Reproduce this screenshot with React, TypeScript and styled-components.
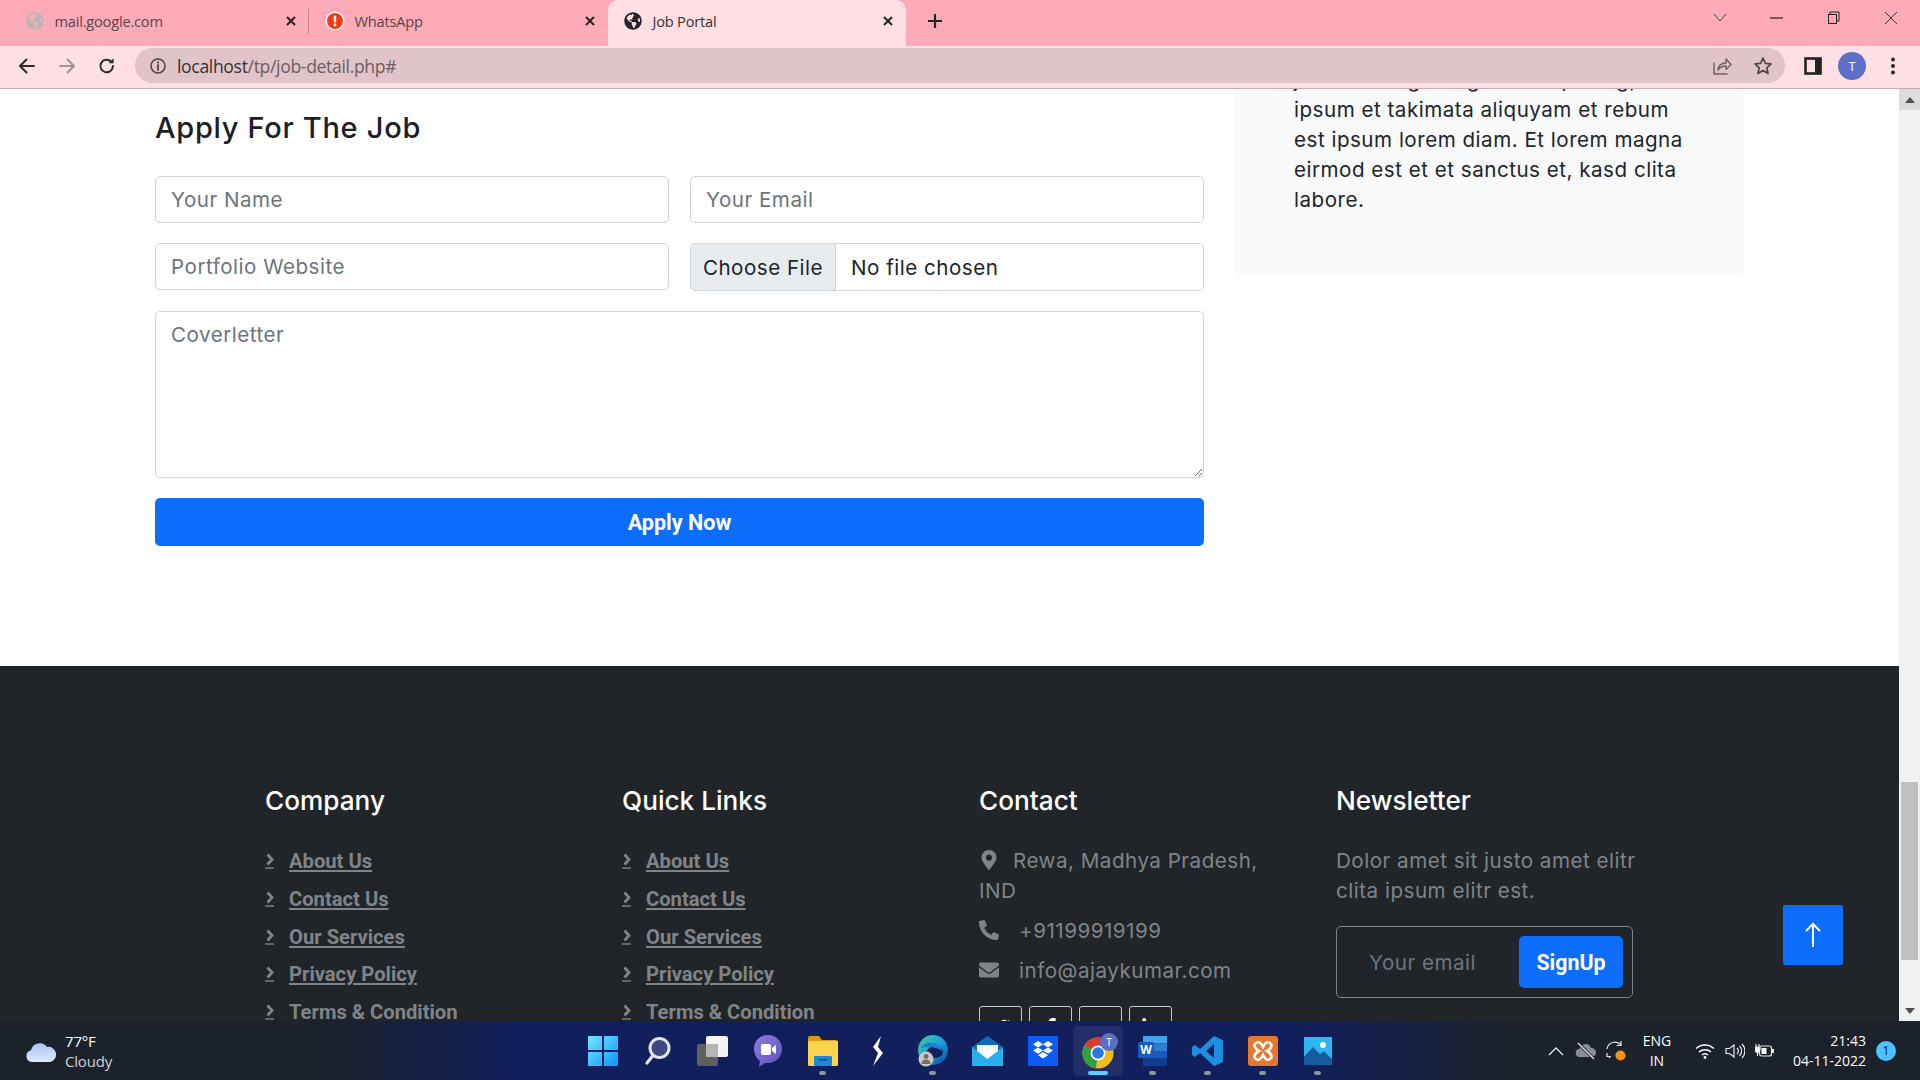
import React from "react";
import styled, { createGlobalStyle } from "styled-components";
import { FaGlobeAmericas, FaMapMarkerAlt, FaPhoneAlt, FaEnvelope, FaTwitter, FaFacebookF, FaYoutube, FaLinkedinIn } from "react-icons/fa";

const SANS = `"Inter", "Liberation Sans", sans-serif`;
const UI = `"Open Sans", "Liberation Sans", sans-serif`;
const BOLD = `"Roboto", "Liberation Sans", sans-serif`;

const Global = createGlobalStyle`
  html, body { margin: 0; height: 100%; overflow: hidden; background: #fff; }
  * { box-sizing: border-box; }
`;

const Screen = styled.div`display: flex; flex-direction: column; height: 100vh; width: 100vw;`;

/* ---------- browser chrome ---------- */
const TabStrip = styled.div`
  height: 46px; flex: none; background: #ffaab8; display: flex; align-items: stretch; font-family: ${UI};
`;
const Tab = styled.div<{ $active?: boolean; $w: number; $pl: number; $sep?: boolean }>`
  width: ${p => p.$w}px; padding: 0 12px 5px ${p => p.$pl}px; display: flex; align-items: center; position: relative;
  background: ${p => (p.$active ? "#fedfe4" : "transparent")};
  border-radius: ${p => (p.$active ? "10px 10px 0 0" : "0")};
  ${p => p.$sep && `&::after { content: ""; position: absolute; right: 0; top: 9px; width: 1px; height: 25px; background: #b88a94; }`}
`;
const TabTitle = styled.span<{ $muted?: boolean }>`
  flex: 1; font-size: 14.6px; letter-spacing: -0.2px; color: ${p => (p.$muted ? "#55464a" : "#3a3033")}; margin-left: 9.5px; white-space: nowrap;
`;
const Fav = styled.span<{ $c: string }>`display: flex; justify-content: center; width: 20px; height: 18px; font-size: 18px; color: ${p => p.$c};`;
const CloseGlyph = () => (
  <svg width="12" height="12" viewBox="0 0 12 12"><path d="M2 2l8 8M10 2l-8 8" stroke="#222" strokeWidth="2" /></svg>
);
const PlusBox = styled.div`display: flex; align-items: center; margin-left: 21px; padding-bottom: 5px;`;
const StripFill = styled.div`flex: 1;`;
const WinControls = styled.div`display: flex; align-items: center; height: 36px; padding-right: 1px;`;
const WinBtn = styled.div<{ $w: number }>`width: ${p => p.$w}px; display: flex; justify-content: center;`;

const Toolbar = styled.div`
  height: 43px; flex: none; background: #fedfe4; border-bottom: 1px solid #c4aeb3; display: flex; align-items: center;
  padding: 0 16px 3px 17px;
`;
const NavIcon = styled.div<{ $w: number }>`width: ${p => p.$w}px; display: flex; justify-content: center; flex: none;`;
const NavGroup = styled.div`display: flex; gap: 20px; width: 118px; flex: none;`;
const Omnibox = styled.div`
  height: 35px; flex: 1; background: #e0c4c9; border-radius: 18px; display: flex; align-items: center;
  padding: 0 12px 0 14px; font-family: ${UI}; font-size: 17.6px; letter-spacing: -0.35px; margin-right: 19px;
`;
const Url = styled.span`color: #333; margin-left: 10px; flex: 1;`;
const UrlRest = styled.span`color: #6b5d60;`;
const OmniIcons = styled.div`display: flex; gap: 21px; align-items: center;`;
const ToolRight = styled.div`display: flex; align-items: center; gap: 16px;`;
const Avatar = styled.div`
  width: 28px; height: 28px; border-radius: 50%; background: #5c6fc7; color: #fff; font: 13px ${UI};
  display: flex; align-items: center; justify-content: center;
`;

/* ---------- viewport ---------- */
const Viewport = styled.div`flex: 1; min-height: 0; display: flex; position: relative; overflow: hidden; background: #fff;`;
const PageArea = styled.div`flex: 1; min-width: 0; overflow: hidden;`;
const Scrollbar = styled.div`width: 21px; flex: none; background: #f1f1f1; display: flex; flex-direction: column; align-items: center;`;
const ScrollBtn = styled.div`width: 100%; height: 21px; flex: none; background: #dcdcdc; display: flex; align-items: center; justify-content: center;`;
const ScrollBtnLow = styled.div`width: 100%; height: 21px; flex: none; margin-top: auto; display: flex; align-items: center; justify-content: center;`;
const Thumb = styled.div`width: 17px; height: 178px; margin-top: 672px; background: #c1c1c1; flex: none;`;

const JobSection = styled.section`
  display: grid; grid-template-columns: 1049px 510px; column-gap: 30px; padding: 0 155px 120px; align-items: start;
`;
const FormCol = styled.div`padding-top: 21px;`;
const FormTitle = styled.h4`
  margin: 0 0 31px; font: 500 29px/35px ${SANS}; color: #1c2024; letter-spacing: 0.7px;
`;
const Form = styled.form`display: grid; grid-template-columns: 1fr 1fr; gap: 20px 21px;`;
const bodyType = `font-family: ${SANS}; font-size: 20.6px; letter-spacing: 0.5px;`;
const field = `
  width: 100%; border: 1px solid #ced4da; border-radius: 5px; background: #fff; ${bodyType}
  color: #212529; outline: none;
  &::placeholder { color: #6c757d; opacity: 1; }
`;
const Input = styled.input`${field} height: 47px; padding: 0 15px;`;
const FileInput = styled.input`
  ${field} height: 48px; padding: 0; line-height: 46px; overflow: hidden;
  &::file-selector-button {
    height: 46px; width: 145px; margin: 0 15px 0 0; padding: 0; background: #e9ecef; border: 0; border-right: 1px solid #ced4da;
    ${bodyType} color: #212529;
  }
`;
const TextArea = styled.textarea`${field} grid-column: 1 / -1; height: 167px; padding: 10px 15px; resize: vertical; display: block;`;
const ApplyBtn = styled.button`
  grid-column: 1 / -1; height: 48px; border: 0; border-radius: 5px; background: #0d6efd; color: #fff;
  font: 700 21.6px ${BOLD};
`;
const AsideCard = styled.aside`
  margin-top: -24px; padding: 0 60px 59px; background: #f8f9fa; border-radius: 5px;
  ${bodyType} line-height: 30px; color: #212529; white-space: nowrap;
`;

/* ---------- footer ---------- */
const Footer = styled.footer`background: #212529; padding: 117px 0 60px 265px; height: 600px;`;
const FooterGrid = styled.div`display: grid; grid-template-columns: repeat(4, 298px); column-gap: 59px;`;
const FootTitle = styled.h4`margin: 0 0 28px; font: 500 26.2px/35px ${SANS}; color: #fff;`;
const LinkList = styled.div`margin-top: -3.5px;`;
const FootLink = styled.a`
  display: flex; align-items: center; height: 37.7px; font: 700 20.2px ${BOLD}; color: #808488; text-decoration: underline; cursor: pointer;
`;
const LinkMark = () => (
  <svg width="24" height="22" viewBox="0 0 24 22" style={{ flex: "none" }}>
    <path d="M2.500 4.500L7 9.500L2.500 14.500" fill="none" stroke="#808488" strokeWidth="2.800" />
    <path d="M0 18H9" stroke="#808488" strokeWidth="1.400" />
  </svg>
);
const Muted = styled.p`margin: 0 0 10px; ${bodyType} line-height: 30px; color: #808488;`;
const NewsText = styled(Muted)`white-space: nowrap;`;
const ContactIcon = styled.span<{ $w: number }>`
  display: inline-block; width: ${p => p.$w}px; vertical-align: -2px; font-size: 20px; line-height: 0;
  svg { display: block; width: auto; height: 1em; }
`;
const Socials = styled.div`display: flex; gap: 7px; padding-top: 10px;`;
const Social = styled.div`
  width: 43px; height: 43px; border: 1px solid #c9cbcd; border-radius: 3px; display: flex; align-items: center; justify-content: center;
  color: #fff; font-size: 19px;
`;
const Signup = styled.div`
  margin-top: 20px; height: 72px; width: 297px; border: 1px solid #7f8488; border-radius: 5px; display: flex; align-items: center;
  padding: 0 9px 0 30px;
`;
const SignupInput = styled.input`
  flex: 1; min-width: 0; border: 0; background: transparent; outline: none; ${bodyType}
  &::placeholder { color: #6c757d; opacity: 1; }
`;
const SignupBtn = styled.button`
  width: 104px; height: 52px; flex: none; border: 0; border-radius: 5px; background: #0d6efd; color: #fff; font: 700 21.4px ${BOLD};
`;
const BackTop = styled.a`
  position: absolute; right: 77px; bottom: 56px; width: 60px; height: 60px; border-radius: 2px; background: #0d6efd;
  display: flex; align-items: center; justify-content: center;
`;

/* ---------- taskbar ---------- */
const Taskbar = styled.div`
  height: 59px; flex: none; display: grid; grid-template-columns: 1fr auto 1fr; align-items: center; font-family: ${UI}; color: #fff;
  background: linear-gradient(90deg, #1b222c 0, #1b222c 320px, #111f5c 520px, #111f5c 1300px, #1b222c 1500px, #1b222c 100%);
`;
const Weather = styled.div`display: flex; align-items: center; padding-left: 25px; gap: 8px;`;
const WeatherText = styled.div`font-size: 15px; line-height: 20px; letter-spacing: -0.2px;`;
const WeatherSub = styled.div`color: #d0d2d6;`;
const TaskIcons = styled.div`display: flex;`;
const TaskSlot = styled.div<{ $on?: boolean }>`
  width: 50px; height: 50px; margin: 0 2.5px; padding-top: 9px; border-radius: 5px; display: flex; flex-direction: column; align-items: center;
  background: ${p => (p.$on ? "rgba(255,255,255,.07)" : "transparent")};
`;
const TaskGlyph = styled.div`height: 32px; display: flex; align-items: center; justify-content: center; flex: none;`;
const Pip = styled.div<{ $on?: boolean; $show?: boolean }>`
  margin-top: 4px; height: 4px; border-radius: 2px; width: ${p => (p.$on ? "20px" : "7px")};
  background: ${p => (p.$on ? "#60cdff" : p.$show ? "#8b93a8" : "transparent")};
`;
const Tray = styled.div`display: flex; align-items: center; justify-content: flex-end; padding-right: 24px;`;
const TrayIcon = styled.div<{ $w: number }>`width: ${p => p.$w}px; display: flex; justify-content: center;`;
const Lang = styled.div`width: 46px; font-size: 14px; line-height: 20px; text-align: center; margin: 0 10px 0 3px;`;
const Clock = styled.div`font-size: 14px; line-height: 20px; text-align: right; margin-left: 13px;`;
const Notif = styled.div`
  width: 20px; height: 20px; border-radius: 50%; background: #4cc2ff; color: #10212c; font-size: 12px; display: flex; align-items: center; justify-content: center; margin-left: 10px;
`;

/* ---------- drawn icons ---------- */
const s = (c: string, w = 2) => ({ fill: "none", stroke: c, strokeWidth: w, strokeLinecap: "round" as const, strokeLinejoin: "round" as const });

const Back = ({ c = "#2b2b2b" }: { c?: string }) => (
  <svg width="20" height="20" viewBox="0 0 20 20"><path d="M17 10H3M9.500 3.500L3 10l6.500 6.500" {...s(c)} /></svg>
);
const Forward = () => (
  <svg width="20" height="20" viewBox="0 0 20 20"><path d="M3 10h14M10.500 3.500L17 10l-6.500 6.500" {...s("#a68f95")} /></svg>
);
const Reload = () => (
  <svg width="20" height="20" viewBox="0 0 20 20"><path d="M16 10a6.300 6.300 0 1 1-1.800-4.400" {...s("#2b2b2b")} /><path d="M16.600 2.200v5h-5z" fill="#2b2b2b" /></svg>
);
const Info = () => (
  <svg width="18" height="18" viewBox="0 0 18 18"><circle cx="9" cy="9" r="7" {...s("#4e4447", 1.6)} /><path d="M9 8v5" {...s("#4e4447", 1.8)} /><circle cx="9" cy="5.500" r="1.100" fill="#4e4447" /></svg>
);
const Share = () => (
  <svg width="20" height="20" viewBox="0 0 20 20"><path d="M2 7v11h13" {...s("#6b6063", 1.4)} /><path d="M6 14c.5-4.500 3.500-7 8-7V3l5 5.500-5 5V10c-3.500 0-6 1.200-8 4z" {...s("#6b6063", 1.4)} /></svg>
);
const Star = () => (
  <svg width="20" height="20" viewBox="0 0 20 20"><path d="M10 2l2.400 5.300 5.600.6-4.200 3.900 1.200 5.700L10 14.600 5 17.500l1.200-5.700L2 7.900l5.600-.6z" {...s("#4f4548", 1.7)} /></svg>
);
const SidePanel = () => (
  <svg width="18" height="18" viewBox="0 0 18 18"><rect x="1.500" y="1.500" width="15" height="15" fill="#fedfe4" stroke="#222" strokeWidth="2.600" /><rect x="11" y="1.500" width="5.500" height="15" fill="#222" /></svg>
);
const Dots = () => (
  <svg width="6" height="20" viewBox="0 0 6 20"><circle cx="3" cy="3.500" r="2" fill="#222" /><circle cx="3" cy="10" r="2" fill="#222" /><circle cx="3" cy="16.500" r="2" fill="#222" /></svg>
);
const WhatsFav = () => (
  <svg width="20" height="20" viewBox="0 0 20 20"><circle cx="10" cy="10" r="9.500" fill="#fff" /><circle cx="10" cy="10" r="8" fill="#f23c0e" /><rect x="8.800" y="4.500" width="2.400" height="7" rx="1" fill="#fff" /><circle cx="10" cy="14" r="1.400" fill="#fff" /></svg>
);

const CloudIcon = () => (
  <svg width="32" height="26" viewBox="0 0 32 26">
    <defs><linearGradient id="cl" x1="0" y1="0" x2="0" y2="1"><stop offset="0" stopColor="#a9c4f5" /><stop offset="1" stopColor="#dfe8fb" /></linearGradient></defs>
    <path d="M7 24a6 6 0 0 1-1-11.800A9 9 0 0 1 22 9a7.500 7.500 0 0 1 3 15z" fill="url(#cl)" />
  </svg>
);
const WinIcon = () => (
  <svg width="30" height="30" viewBox="0 0 30 30">
    <defs><linearGradient id="wn" x1="0" y1="0" x2="1" y2="1"><stop offset="0" stopColor="#75e6ff" /><stop offset="1" stopColor="#0a96ff" /></linearGradient></defs>
    <path d="M0 1a1 1 0 0 1 1-1h13v14H0zM16 0h13a1 1 0 0 1 1 1v13H16zM0 16h14v14H1a1 1 0 0 1-1-1zM16 16h14v13a1 1 0 0 1-1 1H16z" fill="url(#wn)" />
  </svg>
);
const SearchIcon = () => (
  <svg width="28" height="30" viewBox="0 0 28 30"><circle cx="15.500" cy="12" r="9.500" fill="#3d4a80" stroke="#dfe4ee" strokeWidth="3" /><path d="M8.500 20L3 27" stroke="#dfe4ee" strokeWidth="3.200" strokeLinecap="round" /></svg>
);
const TaskViewIcon = () => (
  <svg width="31" height="30" viewBox="0 0 31 30"><rect x="0" y="8" width="21" height="22" rx="2" fill="#5f5f5f" /><rect x="9" y="0" width="22" height="21" rx="2" fill="#f4f4f4" /><rect x="9" y="8" width="12" height="13" fill="#b5b5b5" /></svg>
);
const MeetIcon = () => (
  <svg width="30" height="32" viewBox="0 0 30 32">
    <defs><linearGradient id="mt" x1="0" y1="0" x2="1" y2="1"><stop offset="0" stopColor="#8f7fe0" /><stop offset="1" stopColor="#5a4fb8" /></linearGradient></defs>
    <path d="M15 0c8 0 14 6 14 14s-6 14-14 14h-3l-6 4 1-6C3 23 1 19 1 14 1 6 7 0 15 0z" fill="url(#mt)" />
    <rect x="8" y="9" width="10" height="11" rx="2" fill="#fff" /><path d="M19 13l4-3v9l-4-3z" fill="#fff" />
  </svg>
);
const FolderIcon = () => (
  <svg width="30" height="30" viewBox="0 0 30 30">
    <path d="M0 2a2 2 0 0 1 2-2h9l3 4h14a2 2 0 0 1 2 2v3H0z" fill="#d99a0d" /><rect x="0" y="5" width="30" height="25" rx="1.500" fill="#fcd34d" />
    <rect x="6" y="20" width="18" height="10" rx="1" fill="#1e88d8" /><rect x="11" y="23" width="8" height="1.500" fill="#0b3f78" />
  </svg>
);
const BoltIcon = () => (
  <svg width="14" height="30" viewBox="0 0 14 30"><path d="M10 0L2 11l5 6-5 13 10-13-5-6z" fill="#fff" /></svg>
);
const EdgeIcon = () => (
  <svg width="30" height="32" viewBox="0 0 30 32">
    <defs><linearGradient id="ed" x1="0" y1="0" x2="1" y2="1"><stop offset="0" stopColor="#3fd0a8" /><stop offset=".55" stopColor="#1a9ad6" /><stop offset="1" stopColor="#0c3f8f" /></linearGradient></defs>
    <circle cx="15" cy="15" r="15" fill="url(#ed)" /><ellipse cx="17" cy="17" rx="8" ry="6" fill="#111f5c" />
    <path d="M3 13C6 6 22 5 24 16c-5-4-15-5-21-3z" fill="#1e7fd0" />
    <circle cx="8" cy="24" r="7.500" fill="#c8c8c8" /><circle cx="8" cy="21.500" r="2.400" fill="#6f6f6f" /><path d="M3.500 29a4.500 4.500 0 0 1 9 0z" fill="#6f6f6f" />
  </svg>
);
const MailIcon = () => (
  <svg width="31" height="30" viewBox="0 0 31 30">
    <path d="M15.500 0L31 11v19H0V11z" fill="#0f6cbd" /><path d="M5 9h21v10l-10 6-11-6z" fill="#fff" />
    <path d="M0 11l15.500 12L31 11v19H0z" fill="#29b0ee" />
  </svg>
);
const DropboxIcon = () => (
  <svg width="30" height="30" viewBox="0 0 30 30">
    <rect width="30" height="30" fill="#0a5cf5" />
    <path d="M10 5l5 3.200-5 3.200-5-3.200zM20 5l5 3.200-5 3.200-5-3.200zM10 11.400l5 3.200-5 3.200-5-3.200zM20 11.400l5 3.200-5 3.200-5-3.200zM10 19.200l5-3.200 5 3.200-5 3.200z" fill="#fff" />
  </svg>
);
const ChromeIcon = () => (
  <svg width="44" height="36" viewBox="0 0 44 36">
    <circle cx="22" cy="20" r="15.500" fill="#f2bd1c" />
    <path d="M22 20L8.600 12.200A15.500 15.500 0 0 1 35.400 12.200z" fill="#db3a2c" />
    <path d="M22 20L8.600 12.200A15.500 15.500 0 0 0 20 35.400z" fill="#2f9e46" />
    <circle cx="22" cy="20" r="7.500" fill="#fff" /><circle cx="22" cy="20" r="5.800" fill="#2a78e4" />
    <circle cx="33" cy="9" r="9" fill="#5c6fc7" /><text x="33" y="13" textAnchor="middle" fill="#fff" fontSize="11" fontFamily="Open Sans, sans-serif">T</text>
  </svg>
);
const WordIcon = () => (
  <svg width="30" height="30" viewBox="0 0 30 30">
    <rect x="5" y="0" width="24" height="7.500" fill="#41a5ee" /><rect x="5" y="7.500" width="24" height="7.500" fill="#2b7cd3" /><rect x="5" y="15" width="24" height="7.500" fill="#185abd" /><rect x="5" y="22.500" width="24" height="7.500" fill="#103f91" />
    <rect x="0" y="6" width="16" height="16" rx="1.500" fill="#185abd" /><text x="8" y="18" textAnchor="middle" fill="#fff" fontSize="12" fontWeight="700" fontFamily="Open Sans, sans-serif">W</text>
  </svg>
);
const CodeIcon = () => (
  <svg width="31" height="30" viewBox="0 0 31 30">
    <path d="M22 0l9 4v22l-9 4L8 17l-5 4-3-2v-8l3-2 5 4zM22 8l-8 7 8 7z" fill="#1d8fe0" fillRule="evenodd" />
  </svg>
);
const XamppIcon = () => (
  <svg width="30" height="30" viewBox="0 0 30 30">
    <rect width="30" height="30" rx="3" fill="#e8772e" />
    <path d="M8 7c3-2 5 0 7 4 2-4 4-6 7-4 3 2 1 6-3 8 4 2 6 6 3 8-3 2-5 0-7-4-2 4-4 6-7 4-3-2-1-6 3-8-4-2-6-6-3-8z" fill="none" stroke="#fff" strokeWidth="2.600" />
  </svg>
);
const PhotosIcon = () => (
  <svg width="28" height="28" viewBox="0 0 28 28">
    <rect width="28" height="28" fill="#2fb6f0" /><circle cx="19" cy="8" r="3" fill="#fff" />
    <path d="M0 20l9-10 7 7 4-3 8 8v6H0z" fill="#155c9c" />
  </svg>
);

const taskIcons: { el: React.ReactNode; pip?: boolean; on?: boolean }[] = [
  { el: <WinIcon /> }, { el: <SearchIcon /> }, { el: <TaskViewIcon /> }, { el: <MeetIcon /> },
  { el: <FolderIcon />, pip: true }, { el: <BoltIcon /> }, { el: <EdgeIcon />, pip: true }, { el: <MailIcon /> },
  { el: <DropboxIcon /> }, { el: <ChromeIcon />, on: true }, { el: <WordIcon />, pip: true }, { el: <CodeIcon />, pip: true },
  { el: <XamppIcon />, pip: true }, { el: <PhotosIcon />, pip: true },
];

const links = ["About Us", "Contact Us", "Our Services", "Privacy Policy", "Terms & Condition"];

function LinkColumn({ title }: { title: string }) {
  return (
    <div>
      <FootTitle>{title}</FootTitle>
      <LinkList>
        {links.map(l => (
          <FootLink key={l}><LinkMark />{l}</FootLink>
        ))}
      </LinkList>
    </div>
  );
}

export default function App() {
  return (
    <Screen>
      <Global />
      <TabStrip>
        <Tab $w={309} $pl={25} $sep>
          <Fav $c="#b9b4b6"><FaGlobeAmericas /></Fav>
          <TabTitle $muted>mail.google.com</TabTitle>
          <CloseGlyph />
        </Tab>
        <Tab $w={299} $pl={16}>
          <WhatsFav />
          <TabTitle $muted>WhatsApp</TabTitle>
          <CloseGlyph />
        </Tab>
        <Tab $w={298} $pl={15} $active>
          <Fav $c="#22252a"><FaGlobeAmericas /></Fav>
          <TabTitle>Job Portal</TabTitle>
          <CloseGlyph />
        </Tab>
        <PlusBox>
          <svg width="16" height="16" viewBox="0 0 16 16"><path d="M8 1v14M1 8h14" stroke="#222" strokeWidth="2.200" /></svg>
        </PlusBox>
        <StripFill />
        <WinControls>
          <WinBtn $w={57}><svg width="14" height="10" viewBox="0 0 14 10"><path d="M1 1l6 7 6-7" fill="none" stroke="#444" /></svg></WinBtn>
          <WinBtn $w={57}><svg width="14" height="4" viewBox="0 0 14 4"><path d="M0 2h13" stroke="#222" strokeWidth="1.200" /></svg></WinBtn>
          <WinBtn $w={57}><svg width="14" height="14" viewBox="0 0 14 14"><path d="M3 3V1h9v9h-2" fill="none" stroke="#222" /><rect x="1.500" y="3.500" width="8" height="9" fill="none" stroke="#222" /></svg></WinBtn>
          <WinBtn $w={57}><svg width="14" height="14" viewBox="0 0 14 14"><path d="M1 1l12 12M13 1L1 13" stroke="#333" strokeWidth="1" /></svg></WinBtn>
        </WinControls>
      </TabStrip>
      <Toolbar>
        <NavGroup>
          <NavIcon $w={20}><Back /></NavIcon>
          <NavIcon $w={20}><Forward /></NavIcon>
          <NavIcon $w={20}><Reload /></NavIcon>
        </NavGroup>
        <Omnibox>
          <Info />
          <Url>localhost<UrlRest>/tp/job-detail.php#</UrlRest></Url>
          <OmniIcons><Share /><Star /></OmniIcons>
        </Omnibox>
        <ToolRight>
          <SidePanel />
          <Avatar>T</Avatar>
          <NavIcon $w={22}><Dots /></NavIcon>
        </ToolRight>
      </Toolbar>

      <Viewport>
        <PageArea>
          <JobSection>
            <FormCol>
              <FormTitle>Apply For The Job</FormTitle>
              <Form onSubmit={e => e.preventDefault()}>
                <Input placeholder="Your Name" />
                <Input placeholder="Your Email" />
                <Input placeholder="Portfolio Website" />
                <FileInput type="file" />
                <TextArea placeholder="Coverletter" />
                <ApplyBtn>Apply Now</ApplyBtn>
              </Form>
            </FormCol>
            <AsideCard>
              justo et no gubergren sadipscing,<br />
              ipsum et takimata aliquyam et rebum<br />
              est ipsum lorem diam. Et lorem magna<br />
              eirmod est et et sanctus et, kasd clita<br />
              labore.
            </AsideCard>
          </JobSection>
          <Footer>
            <FooterGrid>
              <LinkColumn title="Company" />
              <LinkColumn title="Quick Links" />
              <div>
                <FootTitle>Contact</FootTitle>
                <Muted><ContactIcon $w={34}><FaMapMarkerAlt /></ContactIcon>Rewa, Madhya Pradesh,<br />IND</Muted>
                <Muted><ContactIcon $w={40}><FaPhoneAlt /></ContactIcon>+91199919199</Muted>
                <Muted><ContactIcon $w={40}><FaEnvelope /></ContactIcon>info@ajaykumar.com</Muted>
                <Socials>
                  <Social><FaTwitter /></Social>
                  <Social><FaFacebookF /></Social>
                  <Social><FaYoutube /></Social>
                  <Social><FaLinkedinIn /></Social>
                </Socials>
              </div>
              <div>
                <FootTitle>Newsletter</FootTitle>
                <NewsText>Dolor amet sit justo amet elitr<br />clita ipsum elitr est.</NewsText>
                <Signup>
                  <SignupInput placeholder="Your email" />
                  <SignupBtn>SignUp</SignupBtn>
                </Signup>
              </div>
            </FooterGrid>
          </Footer>
        </PageArea>
        <Scrollbar>
          <ScrollBtn><svg width="10" height="6" viewBox="0 0 10 6"><path d="M5 0l5 6H0z" fill="#505050" /></svg></ScrollBtn>
          <Thumb />
          <ScrollBtnLow><svg width="10" height="6" viewBox="0 0 10 6"><path d="M0 0h10L5 6z" fill="#505050" /></svg></ScrollBtnLow>
        </Scrollbar>
        <BackTop>
          <svg width="18" height="26" viewBox="0 0 18 26"><path d="M9 25V2M2 9l7-7 7 7" fill="none" stroke="#fff" strokeWidth="2" /></svg>
        </BackTop>
      </Viewport>

      <Taskbar>
        <Weather>
          <CloudIcon />
          <WeatherText>77°F<WeatherSub>Cloudy</WeatherSub></WeatherText>
        </Weather>
        <TaskIcons>
          {taskIcons.map((t, i) => (
            <TaskSlot key={i} $on={t.on}>
              <TaskGlyph>{t.el}</TaskGlyph>
              <Pip $on={t.on} $show={t.pip} />
            </TaskSlot>
          ))}
        </TaskIcons>
        <Tray>
          <TrayIcon $w={30}><svg width="16" height="10" viewBox="0 0 16 10"><path d="M1 9l7-7 7 7" fill="none" stroke="#e8e8e8" strokeWidth="1.300" /></svg></TrayIcon>
          <TrayIcon $w={30}><svg width="22" height="18" viewBox="0 0 22 18"><path d="M5 15a4 4 0 0 1-.5-8A6 6 0 0 1 16 6a4.500 4.500 0 0 1 1 9z" fill="#8a8d93" /><path d="M3 1l16 16" stroke="#1b222c" strokeWidth="3" /><path d="M3 1l16 16" stroke="#e8e8e8" strokeWidth="1.200" /></svg></TrayIcon>
          <TrayIcon $w={30}><svg width="22" height="22" viewBox="0 0 22 22"><path d="M2 9a8 8 0 0 1 14-4M16 1v4.500h-4.500M5 18a8 8 0 0 1-1.500-2M2 13v3.500h4" fill="none" stroke="#e8e8e8" strokeWidth="1.200" /><circle cx="15.500" cy="15.500" r="5" fill="#f7930e" /></svg></TrayIcon>
          <Lang>ENG<br />IN</Lang>
          <TrayIcon $w={30}><svg width="20" height="16" viewBox="0 0 20 16"><path d="M1 5.500a13 13 0 0 1 18 0M4 9a9 9 0 0 1 12 0M7 12a4.500 4.500 0 0 1 6 0" fill="none" stroke="#fff" strokeWidth="1.500" /><circle cx="10" cy="14.500" r="1.400" fill="#fff" /></svg></TrayIcon>
          <TrayIcon $w={30}><svg width="20" height="18" viewBox="0 0 20 18"><path d="M1 6.500h3.500L9 3v12l-4.500-3.500H1z" fill="none" stroke="#e8e8e8" strokeWidth="1.200" /><path d="M12 6a4 4 0 0 1 0 6M14.500 4a7 7 0 0 1 0 10M17 2a10 10 0 0 1 0 14" fill="none" stroke="#e8e8e8" strokeWidth="1.200" /></svg></TrayIcon>
          <TrayIcon $w={30}><svg width="20" height="16" viewBox="0 0 20 16"><path d="M1 1v3M4 1v3M0 4h5v3a2.500 2.500 0 0 1-5 0zM2.500 9v4" fill="#fff" stroke="#fff" strokeWidth="1" /><rect x="4.500" y="3" width="12" height="10" rx="2" fill="none" stroke="#e8e8e8" strokeWidth="1.200" /><rect x="6.500" y="5" width="5" height="6" fill="#fff" /><rect x="17" y="6" width="2" height="4" fill="#e8e8e8" /></svg></TrayIcon>
          <Clock>21:43<br />04-11-2022</Clock>
          <Notif>1</Notif>
        </Tray>
      </Taskbar>
    </Screen>
  );
}
